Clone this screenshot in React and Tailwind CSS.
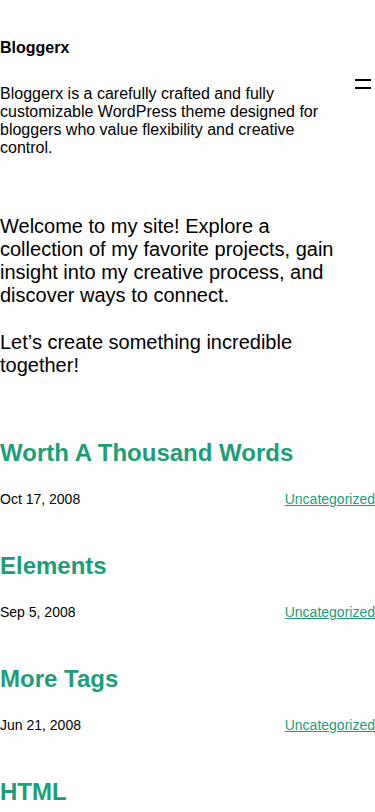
import React from "react";

const posts = [
  { title: "Worth A Thousand Words", date: "Oct 17, 2008" },
  { title: "Elements", date: "Sep 5, 2008" },
  { title: "More Tags", date: "Jun 21, 2008" },
  { title: "HTML", date: "May 30, 2008" },
];

const PostItem = ({ title, date }) => (
  <article className="mb-[45px]">
    <h2 className="text-[24px] leading-[28px] font-bold text-[#1c9d7a]">
      <a href="#">{title}</a>
    </h2>
    <div className="mt-[24px] flex justify-between text-[14px] leading-[16px]">
      <span className="text-black">{date}</span>
      <a href="#" className="text-[#1c9d7a] underline">
        Uncategorized
      </a>
    </div>
  </article>
);

export default function App() {
  return (
    <div
      className="min-h-screen bg-white text-black"
      style={{ fontFamily: '"Liberation Sans", Arial, sans-serif' }}
    >
      {/* Header */}
      <header className="flex justify-between pt-[39px]">
        <div className="w-[335px]">
          <p className="text-[16px] leading-[18px] font-bold">Bloggerx</p>
          <p className="mt-[28px] text-[16px] leading-[18px]">
            Bloggerx is a carefully crafted and fully customizable WordPress
            theme designed for bloggers who value flexibility and creative
            control.
          </p>
        </div>
        <button
          aria-label="Open menu"
          className="mt-[40px] mr-[4px] flex h-[9.5px] w-[16px] flex-col justify-between self-start"
        >
          <span className="block h-[1.5px] w-full bg-black"></span>
          <span className="block h-[1.5px] w-full bg-black"></span>
        </button>
      </header>

      {/* Intro */}
      <section className="mt-[58px] w-[345px] text-[20px] leading-[23px]">
        <p>
          Welcome to my site! Explore a collection of my favorite projects,
          gain insight into my creative process, and discover ways to connect.
        </p>
        <p className="mt-[24px]">Let’s create something incredible together!</p>
      </section>

      {/* Posts */}
      <main className="mt-[62px]">
        {posts.map((post, index) => (
          <PostItem key={index} title={post.title} date={post.date} />
        ))}
      </main>
    </div>
  );
}
